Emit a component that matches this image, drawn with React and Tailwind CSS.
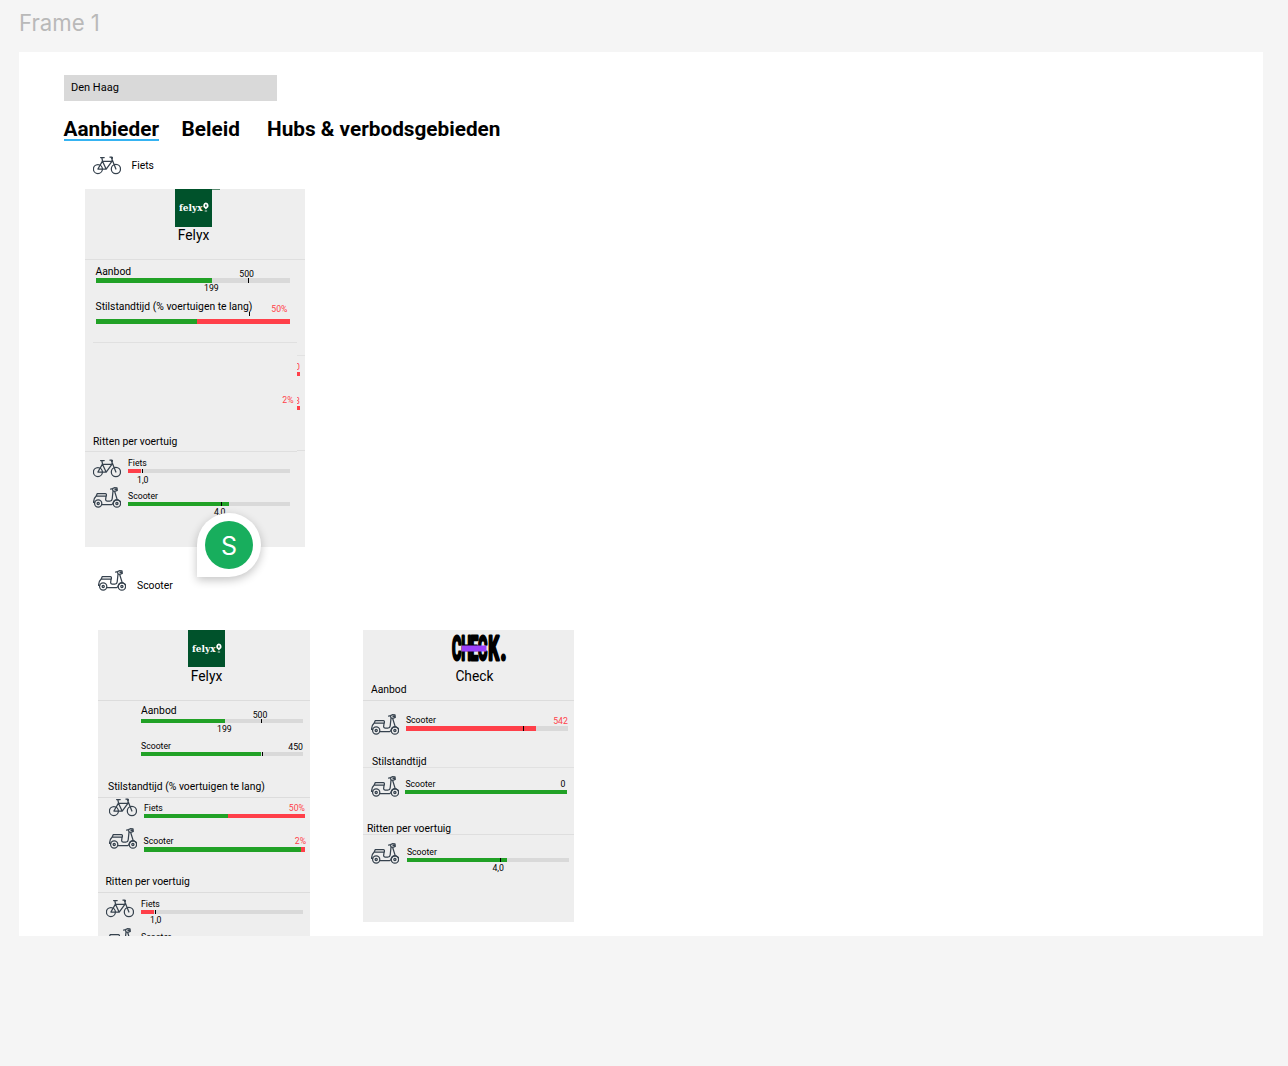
import React from "react";

function Bike({ className = "" }) {
  return (
    <svg viewBox="0 0 28 19" className={"block h-[19px] w-[28px] shrink-0 " + className} fill="none" stroke="#36424e" strokeWidth="1.25" strokeLinecap="round" strokeLinejoin="round">
      <circle cx="4.9" cy="13" r="4.5" />
      <circle cx="22.9" cy="13" r="4.6" />
      <path d="M4.9 13 9.3 5.4H18.9L13.2 13H4.9M7.6 1.6H11.2M8.9 2 9.6 5.4 13 12.8M16.9 1H18.6Q19.7 1 19.3 2.4L18.9 5M18.2 1.2 22.9 13" />
    </svg>
  );
}

function Moped({ className = "" }) {
  return (
    <svg viewBox="0 0 28 21" className={"block h-[21px] w-[28px] shrink-0 " + className} fill="none" stroke="#36424e" strokeWidth="1.25" strokeLinecap="round" strokeLinejoin="round">
      <circle cx="5.2" cy="16.5" r="3.6" />
      <circle cx="5.2" cy="16.5" r="1.1" />
      <circle cx="23.9" cy="16.5" r="3.7" />
      <circle cx="23.9" cy="16.5" r="1.1" />
      <path d="M3.2 9 4.3 6.5H12.3Q13.8 6.6 13.3 9ZM3.2 9Q.6 11.2.6 15.4H1.6M13.1 9 12.6 12.6Q12.6 14 14 14H17.2Q18.9 13.8 19.2 11.8L20 4.4M8.8 17.6H18.6Q20 17.4 20.3 15.5Q21.3 12.8 24.8 12.7L27.4 14.5M21.6 4.3 24.2 12.6M17.6 2.1 19.5 1.6 21.3.7 24 .8 24.3 3.4 21.8 4.3 19.9 3.8 19.5 1.6M22 2.4H24" />
    </svg>
  );
}

function FelyxLogo({ className = "" }) {
  return (
    <div className={"flex w-[37px] shrink-0 items-center bg-[#00522b] pl-[4px] text-white " + className}>
      <svg viewBox="0 0 31 16" className="block h-[16px] w-[31px]">
        <text x="0" y="10.9" fontFamily="'DejaVu Serif', serif" fontWeight="700" fontSize="9.8" textLength="23.6" lengthAdjust="spacingAndGlyphs" fill="#fff">felyx</text>
        <path d="M26.9 2.6A2.8 3 0 0 1 28 8.3L26.9 9.5 25.8 8.3A2.8 3 0 0 1 26.9 2.6Z" fill="#fff" />
        <ellipse cx="26.9" cy="5.6" rx=".8" ry="1.4" fill="#00522b" />
        <path d="M25.7 11H28.1" stroke="#fff" strokeWidth=".8" />
      </svg>
    </div>
  );
}

function CheckLogo() {
  return (
    <svg viewBox="0 0 56 29" className="block h-[29px] w-[56px]" fontFamily="Roboto, sans-serif" fontWeight="700" fontSize="34" fill="#000" stroke="#000" strokeWidth="3" strokeLinejoin="round">
      <g transform="translate(.9 26.1) scale(.42 1)">
        <text x="0 22 44 62" y="0">CHEC</text>
      </g>
      <g transform="translate(37.2 26.1) scale(.5 1)">
        <text x="0" y="0">K</text>
      </g>
      <g transform="translate(49.6 26.1) scale(.6 1)">
        <text x="0" y="0">.</text>
      </g>
      <path d="M10.5 11.5H35.5V17.5H10.5Z" fill="#9b41fb" stroke="none" />
    </svg>
  );
}

const Title = ({ children, className = "", size = "text-[10.35px]" }) => (
  <div className={"h-[12px] whitespace-nowrap leading-[12px] " + size + " " + className}>
    <span className="relative top-px">{children}</span>
  </div>
);

/* One measurement: label row, segmented bar with a target tick, optional figure below */
function Meter({ label, value, alert, head = "h-[10.5px]", segments, tick, foot, footPad = "", className = "w-[162px]" }) {
  return (
    <div className={"shrink-0 text-[8.7px] leading-[10px] " + className}>
      <div className={"flex justify-between " + head}>
        <span>{label}</span>
        <span className={alert ? "text-[#ff3f49]" : ""}>{value}</span>
      </div>
      <div className="relative flex h-[4.5px] bg-[#d9d9d9]">
        {segments.map((s, i) => <div key={i} className={"h-full " + s} />)}
        {tick && <div className={"absolute top-0 h-full w-px bg-black " + tick} />}
      </div>
      {foot && <div className={"h-[10px] " + footPad}>{foot}</div>}
    </div>
  );
}

function CardHead({ logo, name, className = "" }) {
  return (
    <div className={"flex flex-col items-center " + className}>
      {logo}
      <div className="h-[16px] text-[13.8px] leading-[16px]">{name}</div>
    </div>
  );
}

function BikeProviderCard() {
  return (
    <section className="relative ml-[66px] mt-[14px] flex h-[358px] w-[220px] shrink-0 bg-[#eee]">
      <div className="flex w-[212px] shrink-0 flex-col">
        <div className="flex h-[71px] shrink-0 flex-col border-b border-[#dfdfdf]">
          <div className="ml-[97px] h-px w-[38px] shrink-0 bg-[#5d8a72]" />
          <CardHead className="-mt-px ml-[90px] w-[37px]" logo={<FelyxLogo className="-mb-[.5px] h-[38px]" />} name="Felyx" />
        </div>
        <div className="ml-[8px] flex h-[83px] w-[204px] shrink-0 flex-col border-b border-[#e0e0e0] pl-[2.5px]">
          <div className="flex h-[18px] justify-between pr-[43px] pt-[5px]">
            <Title>Aanbod</Title>
            <span className="mt-[4px] text-[8.7px] leading-[10px]">500</span>
          </div>
          <Meter className="w-[194.5px]" head="h-0" segments={["w-[116.5px] bg-[#21a126]"]} tick="left-[152.5px]" foot="199" footPad="mt-[.5px] pl-[108.5px]" />
          <div className="mt-[7px] flex justify-between pr-[9.5px]">
            <Title>Stilstandtijd (% voertuigen te lang)</Title>
            <span className="mt-[4px] h-[10px] text-[8.7px] leading-[10px] text-[#ff3f49]">50%</span>
          </div>
          <div className="-mt-[2.5px] ml-[153.5px] h-[4.5px] w-px shrink-0 bg-black" />
          <Meter className="mt-[3px] w-[194.5px]" head="h-0" segments={["w-[101px] bg-[#21a126]", "w-[93.5px] bg-[#ff3f49]"]} />
        </div>
        <div className="mt-[52px] h-[10px] pr-[3.5px] text-right text-[8.7px] leading-[10px] text-[#ff3f49]">2%</div>
        <div className="mt-[30px] flex h-[17px] shrink-0 border-b border-[#dfdfdf] pl-[8px]"><Title>Ritten per voertuig</Title></div>
        <div className="flex gap-[7.5px] pl-[7.5px] pt-[6px]">
          <Bike className="mt-px" />
          <Meter label="Fiets" segments={["w-[12.5px] bg-[#ff3f49]"]} tick="left-[14px]" foot="1,0" footPad="mt-[1.5px] pl-[9px]" />
        </div>
        <div className="mt-[6.5px] flex gap-[7.5px] pl-[7.5px]">
          <Moped className="-mt-[4px]" />
          <Meter label="Scooter" segments={["w-[100.5px] bg-[#21a126]"]} tick="left-[93px]" foot="4,0" footPad="mt-px pl-[86px]" />
        </div>
      </div>
      <div className="flex w-[8px] flex-col overflow-hidden text-[8.7px] leading-[10px] text-[#ff3f49]">
        <div className="h-[71px] shrink-0 border-b border-[#dfdfdf]" />
        <div className="h-[96px] shrink-0 border-b border-[#e2e2e2]" />
        <div className="mt-[6px] flex h-[10px] w-[3px] justify-end overflow-hidden">0</div>
        <div className="h-[4px] w-[3px] bg-[#ff3f49]" />
        <div className="mt-[20px] flex h-[10px] w-[3px] justify-end overflow-hidden">3</div>
        <div className="h-[4px] w-[3px] bg-[#ff3f49]" />
        <div className="mt-[40px] h-px shrink-0 bg-[#dfdfdf]" />
      </div>
      <div className="absolute left-[112px] top-[324px] flex h-[64px] w-[64px] items-center justify-center rounded-full rounded-bl-none bg-white shadow-[0_3px_10px_rgba(0,0,0,0.24)]">
        <div className="flex h-[48px] w-[48px] items-center justify-center rounded-full bg-[#18ae5d] pt-[3px] font-[Inter,sans-serif] text-[25px] leading-none text-white">S</div>
      </div>
    </section>
  );
}

function FelyxCard() {
  return (
    <section className="flex h-[330px] w-[212.4px] shrink-0 flex-col bg-[#eee]">
      <div className="h-[71px] shrink-0 border-b border-[#dcdcdc]">
        <CardHead className="ml-[90px] w-[37px]" logo={<FelyxLogo className="mb-[.5px] h-[37px]" />} name="Felyx" />
      </div>
      <div className="h-[97px] shrink-0 border-b border-[#dcdcdc] pl-[43px] pt-[3.5px]">
        <div className="flex h-[14px] justify-between pr-[43px]">
          <Title className="-mt-[.5px]">Aanbod</Title>
          <span className="mt-[5px] text-[8.7px] leading-[10px]">500</span>
        </div>
        <Meter head="h-0" segments={["w-[84px] bg-[#21a126]"]} tick="left-[120px]" foot="199" footPad="mt-px pl-[76px]" />
        <Meter className="mt-[6.5px] w-[162px]" head="h-[11px]" label="Scooter" value={<span className="relative top-px">450</span>} segments={["w-[120px] bg-[#21a126]"]} tick="left-[121px]" />
        <Title className="-ml-[33px] mt-[24px]">Stilstandtijd (% voertuigen te lang)</Title>
      </div>
      <div className="h-[95px] shrink-0 border-b border-[#dcdcdc] pl-[10.5px]">
        <div className="flex h-[33px] gap-[7.5px]">
          <Bike />
          <Meter className="mt-[5px] w-[161px]" label="Fiets" value="50%" alert segments={["w-[83.5px] bg-[#21a126]", "w-[77.5px] bg-[#ff3f49]"]} />
        </div>
        <div className="flex h-[44.5px] gap-[7px]">
          <Moped className="-mt-[3px]" />
          <Meter className="mt-[5px] w-[161.5px]" head="h-[11px]" label="Scooter" value={<span className="-mr-px">2%</span>} alert segments={["w-[157.5px] bg-[#21a126]", "w-[4px] bg-[#ff3f49]"]} />
        </div>
        <Title className="-ml-[3px] -mt-[.5px]">Ritten per voertuig</Title>
      </div>
      <div className="pl-[7.5px] pt-[6px]">
        <div className="flex h-[33px] gap-[7.5px]">
          <Bike />
          <Meter label="Fiets" segments={["w-[12.5px] bg-[#ff3f49]"]} tick="left-[14px]" foot="1,0" footPad="mt-[1px] pl-[9px]" />
        </div>
        <div className="flex gap-[7.5px]">
          <Moped className="-mt-[4px]" />
          <Meter label="Scooter" segments={["w-[100.5px] bg-[#21a126]"]} />
        </div>
      </div>
    </section>
  );
}

function CheckCard() {
  return (
    <section className="flex h-[292px] w-[211px] shrink-0 flex-col bg-[#eee]">
      <div className="h-[71px] shrink-0 border-b border-[#dcdcdc] pt-[4px]">
        <div className="ml-[88px]"><CheckLogo /></div>
        <div className="ml-[92.5px] mt-[4.5px] h-[16px] text-[13.8px] leading-[16px]">Check</div>
        <Title className="-mt-[.5px] ml-[8px]">Aanbod</Title>
      </div>
      <div className="h-[67px] shrink-0 border-b border-[#e1e1e1] pl-[8px] pt-[13px]">
        <div className="flex h-[41px] gap-[7px]">
          <Moped />
          <Meter className="mt-[1.4px] w-[162px]" head="h-[11px]" label="Scooter" value={<span className="relative top-px">542</span>} alert segments={["w-[130px] bg-[#ff3f49]"]} tick="left-[117px]" />
        </div>
        <Title className="ml-px">Stilstandtijd</Title>
      </div>
      <div className="h-[67px] shrink-0 border-b border-[#dedede] pl-[8px] pt-[8px]">
        <div className="flex h-[46px] gap-[6.5px]">
          <Moped />
          <Meter className="mt-[3px] w-[162px]" label="Scooter" value={<span className="pr-[2px]">0</span>} segments={["w-full bg-[#21a126]"]} />
        </div>
        <Title className="-ml-[4px]">Ritten per voertuig</Title>
      </div>
      <div className="flex gap-[7.5px] pl-[8.5px] pt-[7px]">
        <Moped className="mt-[.5px]" />
        <Meter className="mt-[5px] w-[162px]" label="Scooter" segments={["w-[100.5px] bg-[#21a126]"]} tick="left-[93px]" foot="4,0" footPad="mt-[1px] pl-[85.5px]" />
      </div>
    </section>
  );
}

export default function App() {
  return (
    <div className="flex h-[1066px] w-[1288px] flex-col overflow-hidden bg-[#f5f5f5] pl-[19px] font-[Roboto,sans-serif] text-black">
      <div className="h-[51.5px] shrink-0 pt-[9px] font-[Inter,sans-serif] text-[22.2px] leading-[28px] text-[#b9b9b9]">Frame 1</div>
      <main className="flex h-[884.5px] w-[1244px] shrink-0 flex-col overflow-hidden bg-white">
        <div className="ml-[44.5px] mt-[23.5px] h-[25.5px] w-[213px] shrink-0 bg-[#d9d9d9] pl-[7.5px] pt-[6px]"><Title size="text-[11px]">Den Haag</Title></div>
        <nav className="ml-[44.5px] mt-[17px] flex h-[23px] shrink-0 whitespace-nowrap text-[20.75px] font-bold leading-[23px]">
          <span className="w-[95.5px] border-b-2 border-[#35b3f2]">Aanbieder</span>
          <span className="ml-[22.5px] w-[85.5px]">Beleid</span>
          <span>Hubs &amp; verbodsgebieden</span>
        </nav>
        <div className="ml-[73.5px] mt-[15.5px] flex h-[19px] shrink-0 gap-[11px]"><Bike /><Title className="mt-[3px]">Fiets</Title></div>
        <BikeProviderCard />
        <div className="ml-[79px] mt-[23px] flex h-[21px] shrink-0 gap-[11px]"><Moped /><Title className="mt-[9px]">Scooter</Title></div>
        <div className="ml-[79px] mt-[39px] flex shrink-0 items-start gap-[52.5px]">
          <FelyxCard />
          <CheckCard />
        </div>
      </main>
    </div>
  );
}
